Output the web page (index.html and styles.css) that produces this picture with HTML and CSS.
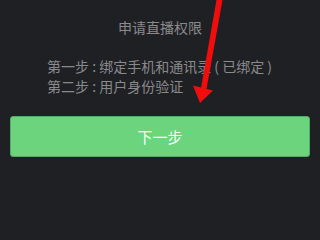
FILE: index.html
```html
<!DOCTYPE html>
<html>
  <head>
    <meta charset="UTF-8" />
    <meta name="viewport" content="width=device-width,initial-scale=1" />
    <title>申请直播权限</title>
    <link rel="stylesheet" href="styles.css">
  </head>
  <body>
    <main class="apply">
      <h1 class="title">申请直播权限</h1>
      <ul class="steps">
        <li>第一步 : 绑定手机和通讯录 ( 已绑定 )</li>
        <li>第二步 : 用户身份验证</li>
      </ul>
      <button class="next" type="button">下一步</button>
    </main>

    <!-- annotation arrow drawn over the screen -->
    <svg class="arrow" width="320" height="240" viewBox="0 0 320 240">
      <polygon points="216.5,0 222.5,0 206.5,89 201,88" fill="#f20d0d" />
      <polygon points="193,85.5 213,90.5 200,103" fill="#f20d0d" />
    </svg>
  </body>
</html>
```

FILE: styles.css
```css
:root {
  --color-background: rgb(31 32 36);
  --color-text: rgb(138 138 140);
  --color-green: rgb(108 212 124);
  --color-green-border: rgb(86 170 100);
  --font-family: "Noto Sans CJK SC", "Noto Sans", sans-serif;
}

* {
  box-sizing: border-box;
  margin: 0;
  padding: 0;
}

html,
body {
  width: 320px;
  height: 240px;
  overflow: hidden;
}

body {
  background-color: var(--color-background);
  font-family: var(--font-family);
  color: var(--color-text);
  position: relative;
}

.apply {
  display: flex;
  flex-direction: column;
  padding-top: 17px;
}

.title {
  font-size: 14px;
  font-weight: normal;
  line-height: 20px;
  text-align: center;
}

.steps {
  list-style-type: none;
  font-size: 14px;
  line-height: 20px;
  padding-left: 47px;
  margin-top: 19px;
}

.steps > li {
  white-space: pre;
}

.next {
  margin: 20px 10px 0;
  height: 41px;
  background-color: var(--color-green);
  border: 1px solid var(--color-green-border);
  border-radius: 3px;
  color: rgb(255 255 255);
  font-family: var(--font-family);
  font-size: 15px;
}

.arrow {
  position: absolute;
  top: 0;
  left: 0;
}
```
